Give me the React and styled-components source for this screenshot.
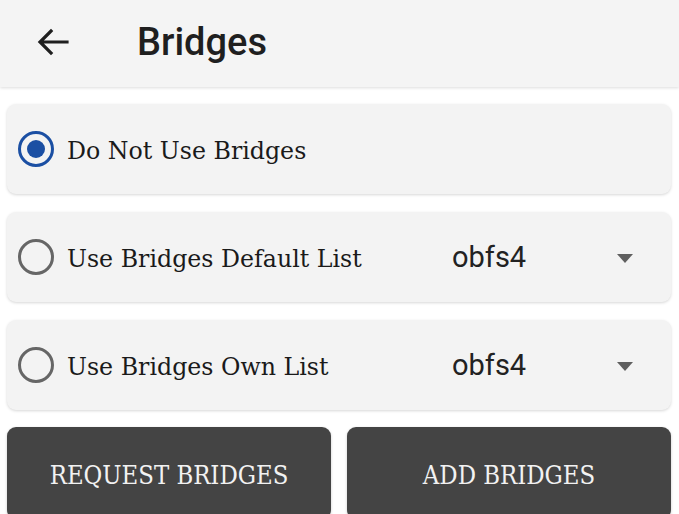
import React, { useState } from 'react';
import styled, { createGlobalStyle } from 'styled-components';

const GlobalStyle = createGlobalStyle`
  html, body {
    margin: 0;
    padding: 0;
    background: #ffffff;
  }
  body {
    width: 679px;
    height: 514px;
    overflow: hidden;
  }
`;

const options = [
  { id: 'none', label: 'Do Not Use Bridges' },
  { id: 'default', label: 'Use Bridges Default List', transport: 'obfs4' },
  { id: 'own', label: 'Use Bridges Own List', transport: 'obfs4' },
];

const App = () => {
  const [selected, setSelected] = useState('none');

  return (
    <StPage>
      <GlobalStyle />
      <StHeader>
        <StBack aria-label="back">
          <svg width="32" height="28" viewBox="0 0 32 28">
            <path d="M30 14H4M14 3L3 14l11 11" fill="none" stroke="#1f1f1f" strokeWidth="3.2" strokeLinecap="square" />
          </svg>
        </StBack>
        <StTitle>Bridges</StTitle>
      </StHeader>

      <StList>
        {options.map((item) => (
          <StCard key={item.id} onClick={() => setSelected(item.id)}>
            <StOption>
              <StRadio $checked={selected === item.id} />
              <StLabel>{item.label}</StLabel>
            </StOption>
            {item.transport && (
              <StSelect>
                <span>{item.transport}</span>
                <StArrow />
              </StSelect>
            )}
          </StCard>
        ))}
      </StList>

      <StButtons>
        <StButton>REQUEST BRIDGES</StButton>
        <StButton>ADD BRIDGES</StButton>
      </StButtons>
    </StPage>
  );
};

const StPage = styled.div`
  display: block;
`;

const StHeader = styled.header`
  display: flex;
  align-items: center;
  height: 87px;
  padding-bottom: 3px;
  box-sizing: border-box;
  background-color: #f4f4f4;
  box-shadow: 0 1px 3px rgba(0, 0, 0, 0.14);
`;

const StBack = styled.div`
  display: flex;
  width: 32px;
  margin-left: 37px;
  margin-right: 68px;
`;

const StTitle = styled.h1`
  margin: 0;
  font-family: Roboto, 'Noto Sans', sans-serif;
  font-size: 38px;
  font-weight: 500;
  color: #1f1f1f;
`;

const StList = styled.div`
  display: flex;
  flex-direction: column;
  gap: 18px;
  padding: 17px 8px 0 7px;
`;

const StCard = styled.div`
  display: flex;
  align-items: center;
  height: 90px;
  padding: 3px 38px 0 11px;
  box-sizing: border-box;
  border-radius: 9px;
  background-color: #f3f3f3;
  box-shadow: 0 1px 3px rgba(0, 0, 0, 0.16);
  cursor: pointer;
`;

const StOption = styled.div`
  display: flex;
  align-items: center;
  gap: 13px;
  width: 434px;
`;

const StRadio = styled.span`
  position: relative;
  flex: 0 0 auto;
  width: 36px;
  height: 36px;
  margin-top: -3px;
  box-sizing: border-box;
  border-radius: 50%;
  border: 3.5px solid ${(p) => (p.$checked ? '#1b4fa3' : '#666666')};

  &::after {
    content: '';
    display: ${(p) => (p.$checked ? 'block' : 'none')};
    position: absolute;
    inset: 6px;
    border-radius: 50%;
    background-color: #1b4fa3;
  }
`;

const StLabel = styled.span`
  font-family: 'DejaVu Serif', 'Liberation Serif', serif;
  font-size: 23.7px;
  color: #1a1a1a;
`;

const StSelect = styled.div`
  display: flex;
  align-items: center;
  justify-content: space-between;
  flex: 1;
  font-family: Roboto, 'Noto Sans', sans-serif;
  font-size: 29px;
  color: #222222;

  & > span:first-child {
    margin-top: -3px;
  }
`;

const StArrow = styled.span`
  width: 0;
  height: 0;
  margin-top: -1px;
  border-left: 8.5px solid transparent;
  border-right: 8.5px solid transparent;
  border-top: 9px solid #5f5f5f;
`;

const StButtons = styled.div`
  display: grid;
  grid-template-columns: 1fr 1fr;
  gap: 16px;
  padding: 17px 8px 0 7px;
`;

const StButton = styled.button`
  height: 92px;
  border: none;
  border-radius: 9px;
  background-color: #444444;
  color: #f2f2f2;
  font-family: 'DejaVu Serif Condensed', 'DejaVu Serif', serif;
  font-stretch: condensed;
  font-size: 25.4px;
  padding: 4px 0 0;
  box-shadow: 0 1px 3px rgba(0, 0, 0, 0.2);
  cursor: pointer;
`;

export default App;
